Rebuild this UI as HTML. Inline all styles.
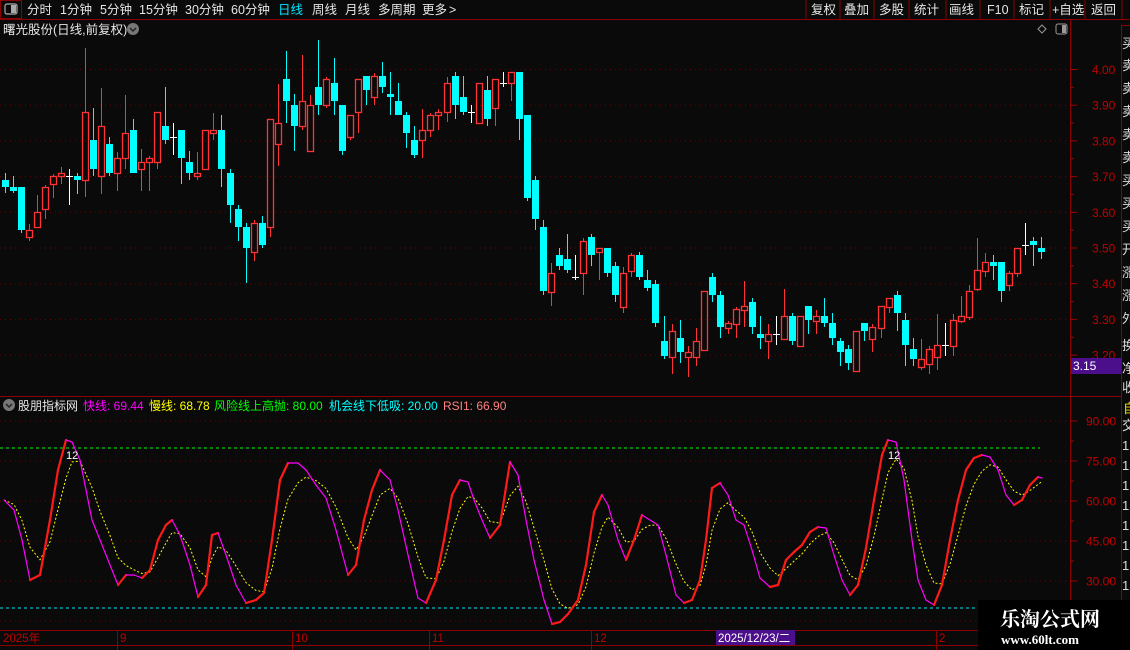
<!DOCTYPE html>
<html><head><meta charset="utf-8">
<style>
html,body{margin:0;padding:0;background:#0a0a0a;width:1130px;height:650px;overflow:hidden;font-family:"Liberation Sans","Noto Sans CJK SC",sans-serif;}
svg{position:absolute;left:0;top:0}
</style></head><body>
<svg id="s" width="1130" height="650" xmlns="http://www.w3.org/2000/svg" font-family="Liberation Sans, Noto Sans CJK SC, sans-serif">
<defs><clipPath id="rc"><rect x="1122" y="20" width="8" height="625"/></clipPath></defs>
<rect width="1130" height="650" fill="#0a0a0a"/>
<!-- toolbar -->
<rect x="0.5" y="0.5" width="21" height="18" fill="none" stroke="#8b0000"/>
<rect x="5" y="4" width="12" height="10" rx="2" fill="none" stroke="#aaa" stroke-width="1.2"/>
<rect x="11" y="5" width="5" height="8" fill="#aaa"/>
<g font-size="12.5" fill="#e6e6e6">
<text x="27" y="14">分时</text><text x="60" y="14">1分钟</text><text x="100" y="14">5分钟</text><text x="139" y="14">15分钟</text><text x="185" y="14">30分钟</text><text x="231" y="14">60分钟</text>
<text x="278" y="14" fill="#00e5ff">日线</text><text x="312" y="14">周线</text><text x="345" y="14">月线</text><text x="378" y="14">多周期</text><text x="422" y="14">更多</text>
<text x="449" y="14">&gt;</text>
<text x="811" y="14">复权</text><text x="844" y="14">叠加</text><text x="879" y="14">多股</text><text x="914" y="14">统计</text><text x="949" y="14">画线</text><text x="987" y="14">F10</text><text x="1019" y="14">标记</text><text x="1052" y="14">+自选</text><text x="1091" y="14">返回</text>
</g>
<g stroke="#8b0000">
<line x1="806" y1="0" x2="806" y2="19"/><line x1="840" y1="0" x2="840" y2="19"/><line x1="874" y1="0" x2="874" y2="19"/><line x1="909" y1="0" x2="909" y2="19"/><line x1="946" y1="0" x2="946" y2="19"/><line x1="980" y1="0" x2="980" y2="19"/><line x1="1014" y1="0" x2="1014" y2="19"/><line x1="1050" y1="0" x2="1050" y2="19"/><line x1="1085" y1="0" x2="1085" y2="19"/><line x1="1122" y1="0" x2="1122" y2="19"/>
<line x1="0" y1="19.5" x2="1130" y2="19.5"/>
<line x1="1070.5" y1="19" x2="1070.5" y2="645"/>
<line x1="1121.5" y1="25" x2="1121.5" y2="645"/>
<line x1="0" y1="396.5" x2="1121" y2="396.5"/>
<line x1="0" y1="630.5" x2="1121" y2="630.5"/>
<line x1="0" y1="645.5" x2="1130" y2="645.5"/>
</g>
<line x1="1121" y1="25.5" x2="1130" y2="25.5" stroke="#8b0000"/>
<text x="3" y="34" font-size="12.5" fill="#e6e6e6">曙光股份(日线,前复权)</text>
<circle cx="133" cy="29" r="6" fill="#777"/><path d="M130 28l3 3 3-3" stroke="#222" stroke-width="1.5" fill="none"/>
<path d="M1042 25l4 4-4 4-4-4z" fill="none" stroke="#999"/>
<rect x="1056" y="24" width="11" height="10" rx="2" fill="none" stroke="#999"/><rect x="1062" y="25" width="4" height="8" fill="#999"/>
<g id="grid"></g>
<g id="axis" font-size="12" fill="#c00000"></g>
<rect x="1071" y="358" width="50" height="16" fill="#4b0f8c"/>
<text x="1073" y="370" font-size="12" fill="#fff">3.15</text>
<g id="candles"></g>
<!-- sub pane header -->
<circle cx="9" cy="405" r="6" fill="#777"/><path d="M6 404l3 3 3-3" stroke="#222" stroke-width="1.5" fill="none"/>
<g font-size="12">
<text x="18" y="410" fill="#e6e6e6">股朋指标网</text>
<text x="83" y="410" fill="#ff00ff">快线: 69.44</text>
<text x="149" y="410" fill="#ffff00">慢线: 68.78</text>
<text x="214" y="410" fill="#00ff00">风险线上高抛: 80.00</text>
<text x="329" y="410" fill="#00ffff">机会线下低吸: 20.00</text>
<text x="443" y="410" fill="#ff8080">RSI1: 66.90</text>
</g>
<line x1="0" y1="448" x2="1040" y2="448" stroke="#00ff00" stroke-dasharray="3,3"/>
<line x1="0" y1="608" x2="1040" y2="608" stroke="#00e5ff" stroke-dasharray="3,3"/>
<g id="ind"></g>
<text x="66" y="459" font-size="11" fill="#fff">12</text>
<text x="888" y="459" font-size="11" fill="#fff">12</text>
<!-- date axis -->
<g font-size="11.5" fill="#c00000">
<text x="3" y="642">2025年</text><text x="120" y="642">9</text><text x="295" y="642">10</text><text x="432" y="642">11</text><text x="594" y="642">12</text><text x="939" y="642">2</text>
</g>
<g stroke="#8b0000"><line x1="117.5" y1="630" x2="117.5" y2="650"/><line x1="292.5" y1="630" x2="292.5" y2="650"/><line x1="429.5" y1="630" x2="429.5" y2="650"/><line x1="591.5" y1="630" x2="591.5" y2="650"/><line x1="936.5" y1="630" x2="936.5" y2="650"/></g>
<rect x="716" y="630" width="79" height="15" fill="#4b0f8c"/>
<text x="718" y="642" font-size="11.5" fill="#fff">2025/12/23/二</text>
<!-- right column -->
<g font-size="13" fill="#ddd" clip-path="url(#rc)">
<text x="1122" y="48">买</text><text x="1122" y="70">卖</text><text x="1122" y="93">卖</text><text x="1122" y="116">卖</text><text x="1122" y="139">卖</text><text x="1122" y="162">卖</text><text x="1122" y="185">买</text><text x="1122" y="208">买</text><text x="1122" y="231">买</text><text x="1122" y="254">开</text><text x="1122" y="277">涨</text><text x="1122" y="300">涨</text><text x="1122" y="323">外</text><text x="1122" y="350">换</text><text x="1122" y="373">净</text><text x="1122" y="392">收</text>
<text x="1123" y="413" fill="#e0e000">自</text><text x="1122" y="430">交</text>
<text x="1122" y="450">1</text><text x="1122" y="470">1</text><text x="1122" y="490">1</text><text x="1122" y="510">1</text><text x="1122" y="530">1</text><text x="1122" y="550">1</text><text x="1122" y="570">1</text><text x="1122" y="590">1</text>
</g>
<!-- watermark -->
<rect x="978" y="600" width="152" height="50" fill="#000"/>
<text x="1000" y="626" font-size="20" font-weight="bold" fill="#fff" font-family="Liberation Serif, Noto Serif CJK SC, serif">乐淘公式网</text>
<text x="1001" y="644" font-size="13" font-weight="bold" fill="#fff" font-family="Liberation Serif, serif">www.60lt.com</text>
</svg>
<script>
var NS="http://www.w3.org/2000/svg";
function el(t,a,p){var e=document.createElementNS(NS,t);for(var k in a)e.setAttribute(k,a[k]);(p||document.getElementById("s")).appendChild(e);return e;}
var grid=document.getElementById("grid"),axis=document.getElementById("axis");
var prices=["4.00","3.90","3.80","3.70","3.60","3.50","3.40","3.30","3.20"];
for(var i=0;i<9;i++){var y=69.5+i*35.7;
 el("line",{x1:0,y1:y,x2:1068,y2:y,stroke:"#6a0000","stroke-dasharray":"1,4"},grid);
 el("line",{x1:1070,y1:y,x2:1077,y2:y,stroke:"#a00000"},grid);
 el("line",{x1:1070,y1:y+17.85,x2:1074,y2:y+17.85,stroke:"#a00000"},grid);
 var t=el("text",{x:1092,y:y+4.5},axis);t.textContent=prices[i];}
var sub=["90.00","75.00","60.00","45.00","30.00"];
for(var i=0;i<5;i++){var y=421+i*40;
 el("line",{x1:0,y1:y,x2:1068,y2:y,stroke:"#6a0000","stroke-dasharray":"1,4"},grid);
 el("line",{x1:1070,y1:y,x2:1077,y2:y,stroke:"#a00000"},grid);
 el("line",{x1:1070,y1:y+20,x2:1074,y2:y+20,stroke:"#a00000"},grid);
 var t=el("text",{x:1086,y:y+4.5},axis);t.textContent=sub[i];}
el("line",{x1:0,y1:621,x2:1068,y2:621,stroke:"#6a0000","stroke-dasharray":"1,4"},grid);
var C=[
["c",173,180,187,193],["c",176,187,191,193],["c",187,187,230,233],["r",224,230,237,241],["r",195,212,227,227],["r",185,187,209,219],["r",174,176,184,198],["r",167,173,176,184],["w",169,176,176,205],["c",173,176,180,194],
["r",48,112,180,197],["c",108,140,169,176],["r",88,126,176,194],["c",137,144,173,176],["r",152,158,173,191],["r",95,133,158,169],["c",119,130,173,173],["r",149,162,169,191],["r",156,158,162,191],["r",112,112,162,169],
["c",87,126,140,144],["w",123,137,137,155],["c",130,130,158,184],["c",151,162,173,180],["r",152,173,176,180],["r",130,130,169,169],["r",113,130,133,140],["c",115,130,169,187],["c",169,173,205,223],["c",205,209,227,241],
["c",223,227,248,283],["r",220,223,252,261],["c",216,223,245,248],["r",119,119,227,237],["r",84,123,144,166],["c",51,79,101,123],["c",94,105,126,151],["r",55,101,126,130],["r",95,105,151,151],["c",40,87,105,115],
["r",77,79,105,108],["c",58,83,101,115],["c",105,105,151,155],["r",115,115,137,140],["r",79,79,112,133],["c",76,76,90,105],["r",73,76,97,105],["c",62,76,87,93],["c",72,94,97,115],["c",83,101,115,115],
["c",112,115,133,148],["c",126,140,155,158],["r",109,130,140,158],["r",113,115,130,137],["r",109,112,115,130],["r",77,83,112,122],["c",72,76,105,119],["c",76,97,112,115],["w",105,112,112,123],["r",83,83,123,123],
["c",76,90,119,126],["r",79,79,108,126],["w",72,83,83,87],["r",72,72,83,101],["c",72,72,119,140],["c",115,115,198,201],["c",176,180,219,230],["c",220,227,291,295],["r",263,273,292,306],["c",248,255,266,270],
["c",234,259,270,273],["w",255,277,277,280],["r",238,241,273,295],["c",234,237,255,266],["r",248,248,252,280],["c",248,248,273,277],["c",262,266,295,302],["r",267,273,307,313],["r",253,255,271,277],["c",252,255,277,280],
["c",270,280,288,291],["c",280,284,323,327],["c",316,341,356,359],["r",324,331,357,374],["c",320,338,352,363],["r",346,352,357,377],["r",328,341,357,366],["r",291,291,350,350],["c",273,277,295,302],["c",291,295,327,338],
["r",321,323,328,334],["r",307,309,324,338],["r",281,306,310,327],["c",298,302,327,334],["c",316,334,338,349],["r",324,334,341,359],["w",316,334,334,345],["r",289,316,339,339],["c",313,316,341,345],["r",316,316,346,346],
["c",306,306,320,334],["r",310,316,321,334],["c",298,316,323,327],["c",313,323,338,345],["c",338,341,352,366],["c",345,349,363,370],["r",331,331,371,371],["c",323,323,331,341],["r",324,327,339,352],["r",306,306,328,338],
["r",298,298,307,313],["c",291,295,313,331],["c",313,320,345,366],["c",338,349,359,366],["r",339,359,367,370],["r",346,349,364,374],["r",314,345,357,370],["w",323,345,345,356],["r",314,320,346,356],["r",296,316,321,323],
["r",285,291,317,320],["r",238,270,289,291],["r",253,262,271,277],["c",255,262,266,280],["c",262,262,291,302],["r",271,273,285,291],["r",248,248,273,277],["w",223,245,245,255],["c",237,241,245,266],["c",237,248,252,259]];
var cg=document.getElementById("candles");
C.forEach(function(d,i){var x=Math.round(4.5+8.037*i)+0.5;var t=d[0];
 var col=t=="r"?"#ff3333":t=="c"?"#00ffff":"#ffffff";
 if(t=="w"){el("line",{x1:x,y1:d[1],x2:x,y2:d[4],stroke:col},cg);el("line",{x1:x-3.5,y1:d[2]+.5,x2:x+3.5,y2:d[2]+.5,stroke:col},cg);return;}
 if(t=="r"){el("line",{x1:x,y1:d[1],x2:x,y2:d[2],stroke:col},cg);el("line",{x1:x,y1:d[3],x2:x,y2:d[4],stroke:col},cg);
  el("rect",{x:x-3,y:d[2]+.5,width:6,height:Math.max(1,d[3]-d[2]),fill:"none",stroke:col,"stroke-width":1.3},cg);}
 else{el("line",{x1:x,y1:d[1],x2:x,y2:d[4],stroke:col},cg);el("rect",{x:x-3.5,y:d[2],width:7,height:Math.max(2,d[3]-d[2]),fill:col},cg);}
});
var P=[[4,500],[14,510],[22,540],[30,580],[40,575],[50,520],[58,470],[66,440],[72,442],[80,460],[92,520],[100,540],[110,565],[118,585],[126,575],[134,575],[142,578],[150,570],[158,540],[166,525],[172,520],[180,535],[190,565],[198,597],[206,585],[212,535],[218,533],[226,555],[236,585],[246,603],[256,600],[264,593],[272,540],[280,480],[288,463],[298,463],[306,470],[316,485],[326,498],[336,530],[348,575],[356,565],[364,520],[372,490],[380,470],[390,480],[398,510],[408,555],[418,598],[426,603],[436,580],[444,540],[452,495],[460,480],[468,482],[474,500],[482,520],[490,538],[500,525],[510,462],[518,475],[526,520],[534,560],[544,600],[552,624],[560,622],[568,614],[578,600],[586,565],[594,512],[602,495],[608,505],[618,540],[626,560],[634,540],[642,515],[650,520],[658,525],[666,555],[676,595],[684,603],[692,600],[700,580],[706,540],[712,488],[720,483],[728,495],[736,520],[744,525],[752,550],[760,578],[770,587],[778,585],[786,560],[794,552],[802,545],[810,532],[818,527],[826,528],[834,555],[842,580],[850,595],[858,585],[866,548],[874,500],[882,455],[888,440],[896,442],[904,480],[912,540],[918,580],[926,600],[934,605],[942,585],[950,540],[958,500],[966,470],[974,458],[982,455],[990,457],[998,470],[1006,495],[1014,505],[1022,500],[1030,485],[1038,477],[1042,478]];
var ig=document.getElementById("ind");
var s=[],v=P[0][1];for(var i=0;i<P.length;i++){v=v+(P[i][1]-v)*0.45;s.push([P[i][0],v]);}
var sd="M"+s.map(function(p){return p[0]+" "+p[1].toFixed(1)}).join(" L");
el("path",{d:sd,fill:"none",stroke:"#ffff00","stroke-width":1,"stroke-dasharray":"2,2"},ig);
for(var i=1;i<P.length;i++){var up=P[i][1]<P[i-1][1];
 el("line",{x1:P[i-1][0],y1:P[i-1][1],x2:P[i][0],y2:P[i][1],stroke:up?"#ff1a1a":"#ff00ff","stroke-width":up?2.2:1.2,"stroke-linecap":"round"},ig);}
</script>
</body></html>
